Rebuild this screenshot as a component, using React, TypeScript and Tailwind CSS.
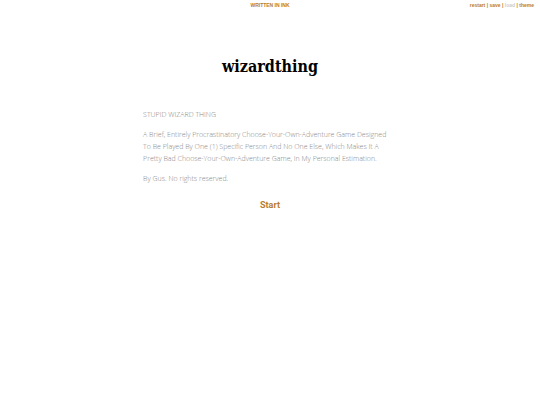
type MenuItem = {
  label: string;
  disabled?: boolean;
};

const menuItems: MenuItem[] = [
  { label: "restart" },
  { label: "save" },
  { label: "load", disabled: true },
  { label: "theme" },
];

function TopBar() {
  return (
    <header className="grid grid-cols-[1fr_auto_1fr] items-center px-1.5 pt-px font-['Liberation_Sans',sans-serif] text-[5px] leading-[8px] font-bold text-[#b97c2c]">
      <p className="col-start-2">WRITTEN IN INK</p>
      <nav className="flex justify-end whitespace-pre" aria-label="Story controls">
        {menuItems.map(({ label, disabled }, index) => (
          <span key={label}>
            {index > 0 && " | "}
            <button type="button" disabled={disabled} className="disabled:text-[#cccccc]">
              {label}
            </button>
          </span>
        ))}
      </nav>
    </header>
  );
}

export default function App() {
  return (
    <div className="min-h-screen bg-white">
      <TopBar />
      <main className="mx-auto w-[47%] max-w-2xl pt-12">
        <h1 className="text-center font-['DejaVu_Serif_Condensed','DejaVu_Serif',serif] text-[16px] leading-5 font-bold text-black">
          wizardthing
        </h1>
        <article className="mt-8 space-y-2 pr-1 font-['Open_Sans',sans-serif] text-[7px] leading-3 font-light text-[#888888]">
          <p>STUPID WIZARD THING</p>
          <p>
            A Brief, Entirely Procrastinatory Choose-Your-Own-Adventure Game Designed To Be Played By
            One (1) Specific Person And No One Else, Which Makes It A Pretty Bad
            Choose-Your-Own-Adventure Game, In My Personal Estimation.
          </p>
          <p>By Gus. No rights reserved.</p>
        </article>
        <p className="mt-3.5 text-center font-[Roboto,sans-serif] text-[9px] leading-3 font-bold">
          <a href="#start" className="text-[#b97c2c]">
            Start
          </a>
        </p>
      </main>
    </div>
  );
}
